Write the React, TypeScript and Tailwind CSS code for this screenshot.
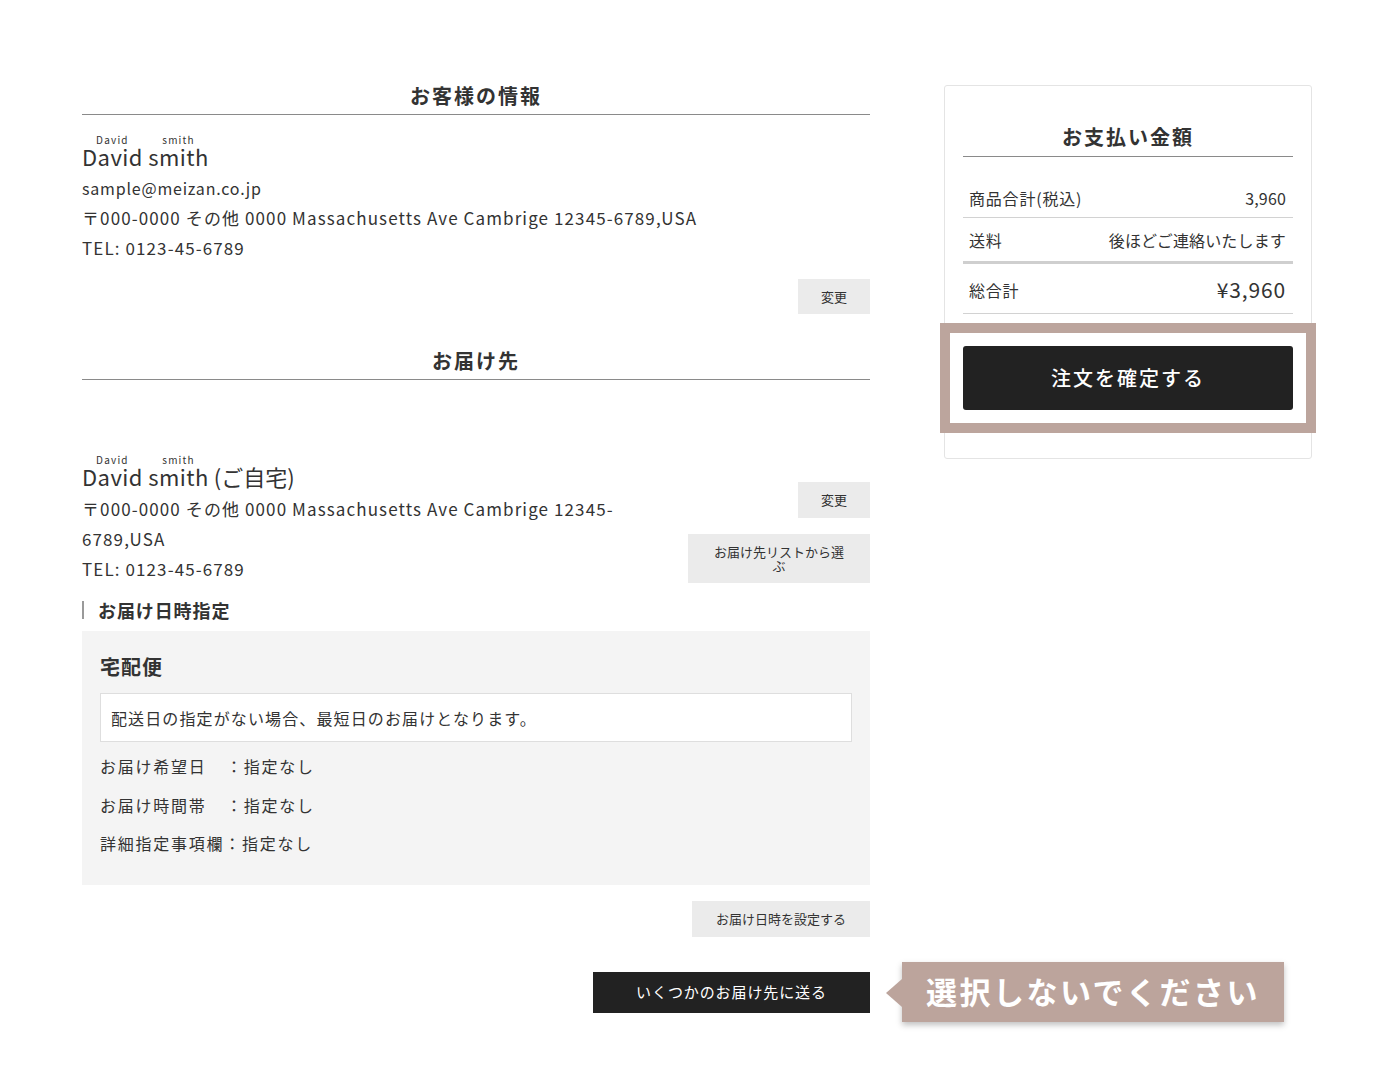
import { ReactNode } from 'react';

const font = { fontFamily: '"Noto Sans CJK JP", "Noto Sans", sans-serif' };

function SectionTitle({ children }: { children: ReactNode }) {
  return (
    <h2 className="text-center text-[20px] leading-[28px] font-bold tracking-[0.1em] text-[#333] pb-1 border-b border-[#8a8a8a]">
      {children}
    </h2>
  );
}

function GrayButton({ children, className = '' }: { children: ReactNode; className?: string }) {
  return (
    <button className={`bg-[#ebebeb] text-[13px] text-[#333] leading-[14px] ${className}`}>
      {children}
    </button>
  );
}

function Name({ suffix }: { suffix?: string }) {
  return (
    <p className="text-[22px] leading-[26px] tracking-[0.02em] text-[#333]">
      <ruby>
        David<rt className="text-[10px] tracking-[0.12em] leading-[12px]">David</rt>
      </ruby>{' '}
      <ruby>
        smith<rt className="text-[10px] tracking-[0.12em] leading-[12px]">smith</rt>
      </ruby>
      {suffix && <span className="tracking-normal"> {suffix}</span>}
    </p>
  );
}

function SummaryRow({ label, value, big = false, className = '' }: { label: string; value: string; big?: boolean; className?: string }) {
  return (
    <div className={`flex items-center justify-between pl-[6px] pr-[7px] ${className}`}>
      <span className="text-[16px] tracking-[0.05em]">{label}</span>
      <span className={big ? 'text-[21px] tracking-[0.04em]' : 'text-[16px] tracking-[0.01em]'}>{value}</span>
    </div>
  );
}

export default function App() {
  return (
    <div className="min-h-screen bg-white text-[#333]" style={font}>
      <div className="flex items-start pt-[82px] pl-[82px]">
        {/* Left column */}
        <div className="w-[788px] shrink-0">
          <SectionTitle>お客様の情報</SectionTitle>

          <div className="mt-[20px] text-[17px] leading-[30px] tracking-[0.065em]">
            <Name />
            <p className="mt-[4px] text-[16px] tracking-[0.05em]">sample@meizan.co.jp</p>
            <p>〒000-0000 その他 0000 Massachusetts Ave Cambrige 12345-6789,USA</p>
            <p>TEL: 0123-45-6789</p>
          </div>

          <div className="flex justify-end mt-[16px]">
            <GrayButton className="w-[72px] h-[35px]">変更</GrayButton>
          </div>

          <div className="mt-[33px]">
            <SectionTitle>お届け先</SectionTitle>
          </div>

          <div className="flex justify-between mt-[75px]">
            <div className="w-[560px] text-[17px] leading-[30px] tracking-[0.065em]">
              <Name suffix="(ご自宅)" />
              <p className="mt-[5px]">
                〒000-0000 その他 0000 Massachusetts Ave Cambrige 12345-<wbr />6789,USA
              </p>
              <p>TEL: 0123-45-6789</p>
            </div>
            <div className="flex flex-col items-end gap-[16px] pt-[27px]">
              <GrayButton className="w-[72px] h-[36px]">変更</GrayButton>
              <GrayButton className="w-[182px] h-[49px] px-[20px]">
                お届け先リストから選
                <br />ぶ
              </GrayButton>
            </div>
          </div>

          <div className="mt-[13px] flex items-center">
            <span className="w-[2px] h-[18px] bg-[#9a9a9a]" />
            <h3 className="ml-[14px] text-[18px] leading-[26px] font-bold tracking-[0.05em]">お届け日時指定</h3>
          </div>

          <div className="mt-[8px] bg-[#f4f4f4] px-[18px] pt-[21px] pb-[22px]">
            <h4 className="text-[20px] leading-[30px] font-bold tracking-[0.05em]">宅配便</h4>
            <div className="mt-[11px] bg-white border border-[#dedede] h-[49px] flex items-center px-[10px] text-[16px] tracking-[0.07em]">
              配送日の指定がない場合、最短日のお届けとなります。
            </div>
            <div className="mt-[5px] text-[16px] leading-[38.5px] tracking-[0.11em]">
              <p>
                <span className="inline-block w-[126px]">お届け希望日</span>：指定なし
              </p>
              <p>
                <span className="inline-block w-[126px]">お届け時間帯</span>：指定なし
              </p>
              <p>詳細指定事項欄：指定なし</p>
            </div>
          </div>

          <div className="flex justify-end mt-[16px]">
            <GrayButton className="w-[178px] h-[36px]">お届け日時を設定する</GrayButton>
          </div>

          <div className="flex justify-end mt-[35px]">
            <div className="relative">
              <button className="w-[277px] h-[41px] bg-[#222] text-white text-[15px] tracking-[0.06em]">
                いくつかのお届け先に送る
              </button>
              {/* annotation callout */}
              <div className="absolute left-[309px] top-[-10px] h-[60px] w-[382px] bg-[#bca49c] shadow-[0_3px_6px_rgba(0,0,0,0.25)] flex items-center justify-center">
                <span className="absolute left-[-16px] top-[17px] w-0 h-0 border-y-[14px] border-y-transparent border-r-[16px] border-r-[#bca49c]" />
                <span className="text-white text-[31px] font-bold tracking-[0.08em]">選択しないでください</span>
              </div>
            </div>
          </div>
        </div>

        {/* Right summary card */}
        <div className="ml-[74px] mt-[3px] w-[368px] shrink-0 border border-[#e4e4e4] rounded-[3px] px-[18px] pt-[37px] pb-[25px]">
          <h2 className="text-center text-[20px] leading-[28px] font-bold tracking-[0.1em] pb-[5px] border-b border-[#8a8a8a]">
            お支払い金額
          </h2>
          <SummaryRow label="商品合計(税込)" value="3,960" className="pt-[29px] pb-[7px] border-b border-[#d2d2d2]" />
          <SummaryRow label="送料" value="後ほどご連絡いたします" className="pt-[10px] pb-[9px] border-b-[3px] border-[#cfcfcf]" />
          <SummaryRow label="総合計" value="¥3,960" big className="pt-[10px] pb-[7px] border-b border-[#d2d2d2]" />
          <div className="-mx-[23px] mt-[9px] border-[10px] border-[#bca59d] p-[13px]">
            <button className="w-full h-[64px] bg-[#222] rounded-[3px] text-white text-[20px] font-medium tracking-[0.1em]">
              注文を確定する
            </button>
          </div>
        </div>
      </div>
    </div>
  );
}
